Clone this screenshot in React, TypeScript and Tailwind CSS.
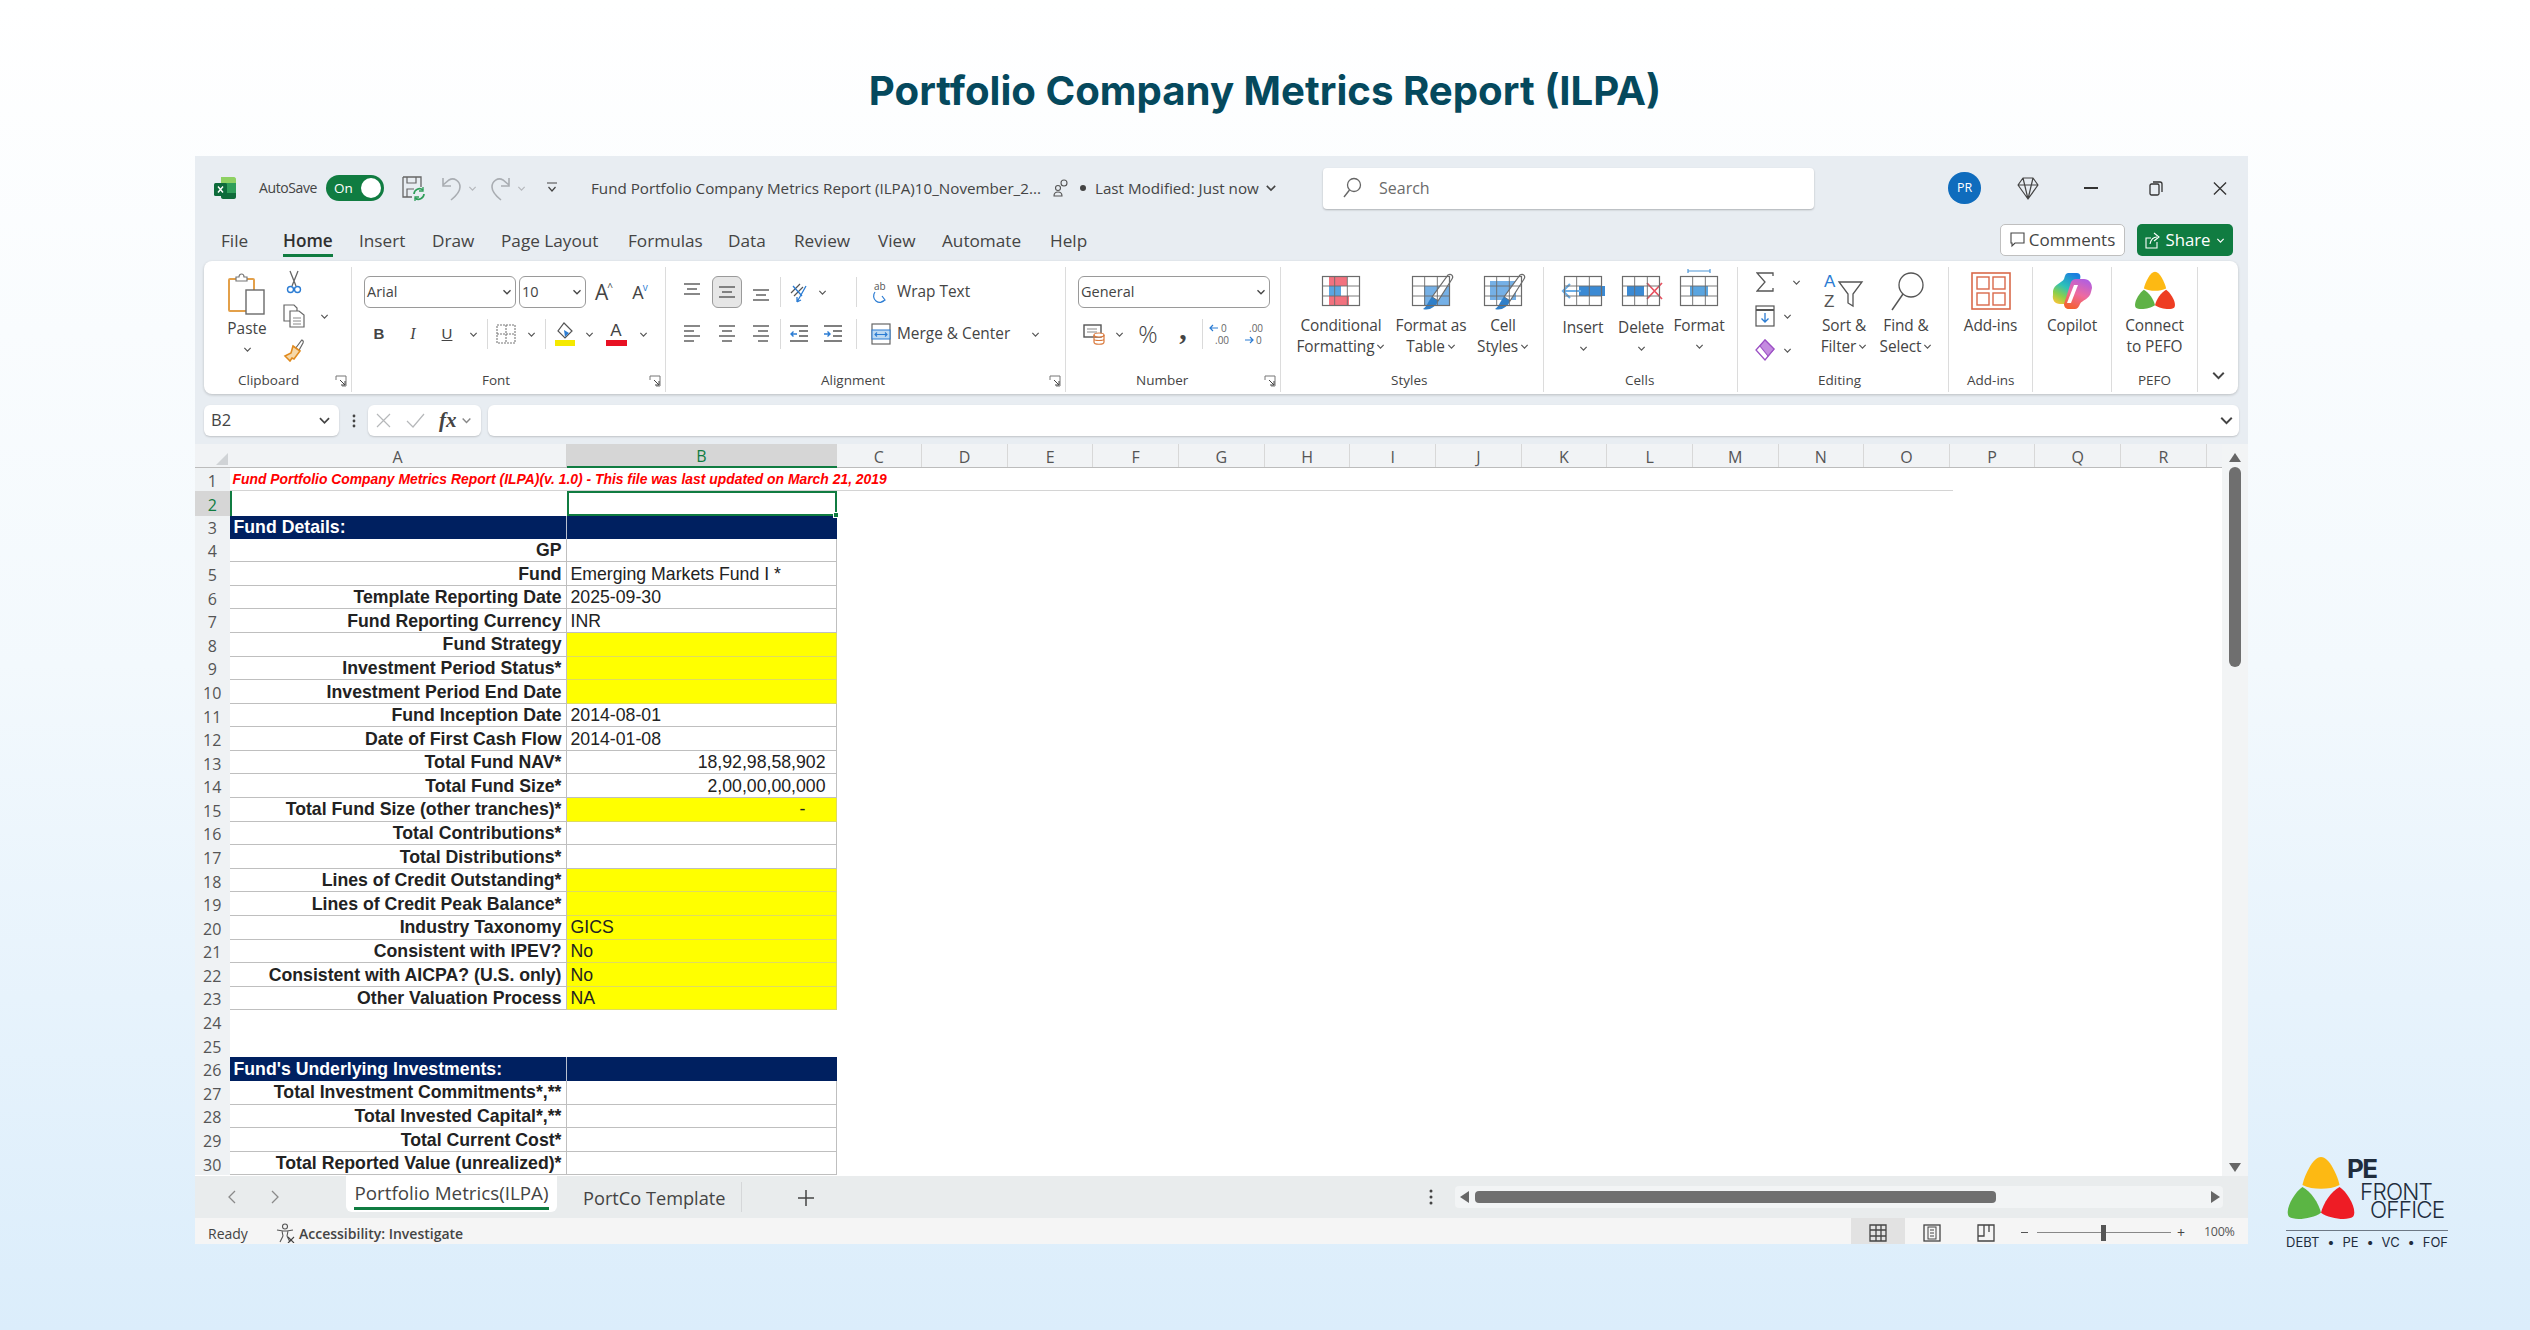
import React from "react";

const S = ({ c = "", children }: { c?: string; children?: React.ReactNode }) => (
  <div className={`flex items-center justify-center shrink-0 ${c}`}>{children}</div>
);

const Chev = ({ s = 9, col = "#555" }: { s?: number; col?: string }) => (
  <svg width={s} height={s} viewBox="0 0 10 10" fill="none" className="shrink-0">
    <path d="M1.5 3.2 L5 6.8 L8.5 3.2" stroke={col} strokeWidth="1.3" />
  </svg>
);

const VSep = () => <div className="w-px h-[30px] bg-[#dadada] shrink-0" />;

const Launcher = () => (
  <svg width="12" height="12" viewBox="0 0 12 12" fill="none" className="shrink-0">
    <path d="M1 5V1H11V11H7" stroke="#777" strokeWidth="1" />
    <path d="M5 5L10 10M10 6V10H6" stroke="#444" strokeWidth="1" />
  </svg>
);

const Group = ({
  c,
  label,
  lc = "",
  launcher,
  children,
  noBorder,
}: {
  c: string;
  label?: string;
  lc?: string;
  launcher?: boolean;
  children: React.ReactNode;
  noBorder?: boolean;
}) => (
  <div className={`shrink-0 mt-[6px] h-[125px] flex flex-col ${noBorder ? "" : "border-r border-[#dcdcdc]"} ${c}`}>
    <div className="h-[103px] flex items-start">{children}</div>
    <div className="h-[22px] flex items-center text-[13.5px] leading-none text-[#444]">
      <span className={lc}>{label}</span>
      {launcher && (
        <span className="ml-auto mr-[4px]">
          <Launcher />
        </span>
      )}
    </div>
  </div>
);

const Big = ({
  c,
  icon,
  lines,
  chev,
  firstTop = "",
}: {
  c: string;
  icon: React.ReactNode;
  lines: string[];
  chev?: "inline" | "below";
  firstTop?: string;
}) => (
  <div className={`shrink-0 flex flex-col items-center text-[15.4px] leading-[21px] text-[#444] tracking-[-0.1px] ${c}`}>
    <div className="h-[48px] flex items-center justify-center">{icon}</div>
    <div className={`whitespace-nowrap ${firstTop}`}>{lines[0]}</div>
    {lines[1] && (
      <div className="whitespace-nowrap flex items-center gap-[2px]">
        {lines[1]}
        {chev === "inline" && <Chev s={9} />}
      </div>
    )}
    {chev === "below" && (
      <div className="h-[21px] flex items-center">
        <Chev s={9} />
      </div>
    )}
  </div>
);

const GridBase = ({ children, w = 38, h = 30 }: { children?: React.ReactNode; w?: number; h?: number }) => (
  <svg width={w + 6} height={h + 10} viewBox={`-3 -8 ${w + 6} ${h + 10}`} fill="none" className="shrink-0 overflow-visible mb-[6px]">
    {children}
    <g stroke="#6b6b6b" strokeWidth="1.2">
      <rect x="0.5" y="0.5" width={w - 1} height={h - 1} />
      <path d={`M${w / 3} 0V${h}M${(2 * w) / 3} 0V${h}M0 ${h / 3}H${w}M0 ${(2 * h) / 3}H${w}`} strokeWidth="0.9" />
    </g>
  </svg>
);

const Brush = ({ x = 0, y = 0 }: { x?: number; y?: number }) => (
  <g transform={`translate(${x} ${y})`}>
    <path d="M27 -4 C30 -6 33 -3 31 0 L17 22 L11 18 Z" fill="#fff" stroke="#6a6a6a" strokeWidth="1.2" />
    <path d="M11 18 L17 22 C15 28 8 32 2 30 C6 28 7 22 11 18Z" fill="#2f7fc9" />
  </g>
);

const CondIcon = () => (
  <GridBase>
    <rect x="7" y="0" width="18" height="10" fill="#f2727f" />
    <rect x="7" y="10" width="12" height="10" fill="#5aa5e0" />
    <rect x="7" y="20" width="20" height="10" fill="#f2727f" />
  </GridBase>
);
const TableIcon = () => (
  <GridBase>
    <rect x="12" y="10" width="26" height="20" fill="#75b0e6" />
    <Brush x="9" y="3" />
  </GridBase>
);
const CellStyleIcon = () => (
  <GridBase>
    <rect x="6" y="5" width="26" height="19" fill="#75b0e6" />
    <Brush x="9" y="3" />
  </GridBase>
);
const InsertIcon = () => (
  <GridBase>
    <rect x="15" y="10" width="26" height="10" fill="#3b8ad4" />
    <path d="M17 15H0M6 8L-1 15L6 22" stroke="#6aaee8" strokeWidth="2.2" />
  </GridBase>
);
const DeleteIcon = () => (
  <GridBase>
    <rect x="5" y="10" width="17" height="10" fill="#3b8ad4" />
    <path d="M25 7L40 23M40 7L25 23" stroke="#e8505f" strokeWidth="1.7" />
  </GridBase>
);
const FormatIcon = () => (
  <GridBase>
    <rect x="10" y="10" width="18" height="10" fill="#5aa5e0" />
    <path d="M8 -5H30M8 -7V-3M30 -7V-3" stroke="#4c95d6" strokeWidth="1.2" />
  </GridBase>
);

const Petals = ({ w, h, y, g, r }: { w: number; h: number; y: string; g: string; r: string }) => (
  <svg width={w} height={h} viewBox="0 0 68 62" className="shrink-0">
    <path d="M34 0 C42 0 50 18 52 27 C42 32 26 32 16 27 C18 18 26 0 34 0Z" fill={y} />
    <path d="M16 29 C24 33 32 45 34 54 C26 60 8 62 3 58 C-2 52 8 34 16 29Z" fill={g} />
    <path d="M52 29 C44 33 36 45 34 54 C42 60 60 62 65 58 C70 52 60 34 52 29Z" fill={r} />
  </svg>
);

const AddinsIcon = () => (
  <svg width="40" height="38" viewBox="0 0 40 38" fill="none">
    <rect x="1" y="1" width="38" height="36" stroke="#d9694a" strokeWidth="1.6" />
    <rect x="6" y="5" width="12" height="12" stroke="#d9694a" strokeWidth="1.4" />
    <rect x="22" y="5" width="12" height="12" stroke="#d9694a" strokeWidth="1.4" />
    <rect x="6" y="21" width="12" height="12" stroke="#d9694a" strokeWidth="1.4" />
    <rect x="22" y="21" width="12" height="12" stroke="#d9694a" strokeWidth="1.4" />
  </svg>
);

const CopilotIcon = () => (
  <svg width="40" height="38" viewBox="0 0 40 38">
    <defs>
      <linearGradient id="cpa" x1="0.7" y1="0" x2="0.2" y2="1">
        <stop offset="0" stopColor="#1b7fe0" />
        <stop offset="0.45" stopColor="#2dc1b8" />
        <stop offset="0.75" stopColor="#8ccf4a" />
        <stop offset="1" stopColor="#f3c538" />
      </linearGradient>
      <linearGradient id="cpb" x1="0.7" y1="0" x2="0.3" y2="1">
        <stop offset="0" stopColor="#b15fe0" />
        <stop offset="0.5" stopColor="#ee6aa0" />
        <stop offset="1" stopColor="#f4612e" />
      </linearGradient>
    </defs>
    <path d="M16 1 H25 C28 1 29 4 28 7 L21 28 C20 31 18 32 15 32 H8 C3 32 0 28 1 23 L1 19 C2 12 10 11 12 7 C13 3 14 1 16 1Z" fill="url(#cpa)" />
    <path d="M17 37 C14 37 12 35 12 32 L19 10 C20 8 22 7 24 7 H32 C37 7 40 11 40 16 L39 20 C38 27 30 28 28 32 C27 35 25 37 23 37Z" fill="url(#cpb)" />
    <path d="M22 13 H26 L19 31 H15Z" fill="#fff" />
  </svg>
);

const Lines3 = ({ va }: { va: "top" | "mid" | "bot" }) => {
  const y = va === "top" ? [3, 8, 13] : va === "mid" ? [6, 11, 16] : [9, 14, 19];
  return (
    <svg width="18" height="22" viewBox="0 0 18 22" fill="none">
      {y.map((v, i) => (
        <path key={i} d={i === 1 ? `M4 ${v}H14` : `M1 ${v}H17`} stroke="#555" strokeWidth="1.4" />
      ))}
    </svg>
  );
};

const LinesH = ({ al }: { al: "l" | "c" | "r" }) => {
  const a = al === "l" ? [1, 1, 1, 1] : al === "c" ? [1, 4, 1, 4] : [1, 6, 1, 6];
  const w = [16, 10, 16, 10];
  return (
    <svg width="18" height="20" viewBox="0 0 18 20" fill="none">
      {[2, 7, 12, 17].map((v, i) => (
        <path key={i} d={`M${a[i]} ${v}H${a[i] + w[i]}`} stroke="#555" strokeWidth="1.4" />
      ))}
    </svg>
  );
};

const Indent = ({ inc }: { inc?: boolean }) => (
  <svg width="20" height="20" viewBox="0 0 20 20" fill="none">
    <path d="M1 2H19M10 7H19M10 12H19M1 17H19" stroke="#555" strokeWidth="1.4" />
    {inc ? (
      <path d="M1 10H7M4.5 7.5L7 10L4.5 12.5" stroke="#2b7cd3" strokeWidth="1.4" />
    ) : (
      <path d="M8 10H2M4.5 7.5L2 10L4.5 12.5" stroke="#2b7cd3" strokeWidth="1.4" />
    )}
  </svg>
);

const CellBox = ({ c, text }: { c: string; text: string }) => (
  <div className={`h-[32px] rounded-[6px] border border-[#9a9a9a] flex items-center pl-[2px] pr-[3px] text-[14.5px] text-[#444] shrink-0 ${c}`}>
    <span className="flex-1">{text}</span>
    <Chev s={10} col="#444" />
  </div>
);

const Clipboard = () => (
  <svg width="38" height="42" viewBox="0 0 38 42" fill="none">
    <rect x="1" y="6" width="25" height="32" rx="1" fill="#fff" stroke="#e3a04a" strokeWidth="2" />
    <path d="M8 6V4H11C11 0 16 0 16 4H19V8H8Z" fill="#fff" stroke="#777" strokeWidth="1.2" />
    <rect x="18" y="17" width="18" height="24" fill="#fff" stroke="#6a6a6a" strokeWidth="1.4" />
  </svg>
);
const Scissors = () => (
  <svg width="16" height="24" viewBox="0 0 16 24" fill="none">
    <path d="M4 1L10 16M12 1L6 16" stroke="#666" strokeWidth="1.3" />
    <circle cx="4.5" cy="19.5" r="3" stroke="#2b7cd3" strokeWidth="1.4" />
    <circle cx="11.5" cy="19.5" r="3" stroke="#2b7cd3" strokeWidth="1.4" />
  </svg>
);
const Copy = () => (
  <svg width="22" height="24" viewBox="0 0 22 24" fill="none">
    <path d="M1 1H11L14 4V17H1Z" fill="#fff" stroke="#666" strokeWidth="1.2" />
    <path d="M7 7H16L21 11V23H7Z" fill="#fff" stroke="#666" strokeWidth="1.2" />
    <path d="M10 14H18M10 17H18M10 20H18" stroke="#888" strokeWidth="1" />
  </svg>
);
const PaintBrush = () => (
  <svg width="22" height="24" viewBox="0 0 22 24" fill="none">
    <path d="M12 11L18 3C19 1 21 3 20 5L15 14Z" fill="#fff" stroke="#666" strokeWidth="1.2" />
    <path d="M10 8L17 13L11 21L9 20L7 23L5 21L2 18L8 15Z" fill="#f6d8a8" stroke="#e08a1e" strokeWidth="1.6" />
  </svg>
);

const rowsData: { n: number; a?: string; b?: string; kind?: "hdr" | "blank"; y?: boolean; right?: boolean }[] = [
  { n: 3, a: "Fund Details:", kind: "hdr" },
  { n: 4, a: "GP" },
  { n: 5, a: "Fund", b: "Emerging Markets Fund I *" },
  { n: 6, a: "Template Reporting Date", b: "2025-09-30" },
  { n: 7, a: "Fund Reporting Currency", b: "INR" },
  { n: 8, a: "Fund Strategy", y: true },
  { n: 9, a: "Investment Period Status*", y: true },
  { n: 10, a: "Investment Period End Date", y: true },
  { n: 11, a: "Fund Inception Date", b: "2014-08-01" },
  { n: 12, a: "Date of First Cash Flow", b: "2014-01-08" },
  { n: 13, a: "Total Fund NAV*", b: "18,92,98,58,902", right: true },
  { n: 14, a: "Total Fund Size*", b: "2,00,00,00,000", right: true },
  { n: 15, a: "Total Fund Size (other tranches)*", b: "-", right: true, y: true },
  { n: 16, a: "Total Contributions*" },
  { n: 17, a: "Total Distributions*" },
  { n: 18, a: "Lines of Credit Outstanding*", y: true },
  { n: 19, a: "Lines of Credit Peak Balance*", y: true },
  { n: 20, a: "Industry Taxonomy", b: "GICS", y: true },
  { n: 21, a: "Consistent with IPEV?", b: "No", y: true },
  { n: 22, a: "Consistent with AICPA? (U.S. only)", b: "No", y: true },
  { n: 23, a: "Other Valuation Process", b: "NA", y: true },
  { n: 24, kind: "blank" },
  { n: 25, kind: "blank" },
  { n: 26, a: "Fund's Underlying Investments:", kind: "hdr" },
  { n: 27, a: "Total Investment Commitments*,**" },
  { n: 28, a: "Total Invested Capital*,**" },
  { n: 29, a: "Total Current Cost*" },
  { n: 30, a: "Total Reported Value (unrealized)*" },
];

const RowNum = ({ n, active }: { n: number; active?: boolean }) => (
  <div
    className={`w-[34.5px] shrink-0 flex items-center justify-center pt-[2px] text-[16px] leading-none font-['Open_Sans',sans-serif] ${
      active ? "bg-[#d6d6d6] text-[#107c41]" : "bg-[#eff2f4] text-[#555]"
    }`}
  >
    {n}
  </div>
);

const tabs: [string, string][] = [
  ["File", "w-[62px]"],
  ["Home", "w-[76px]"],
  ["Insert", "w-[73px]"],
  ["Draw", "w-[69px]"],
  ["Page Layout", "w-[127px]"],
  ["Formulas", "w-[100px]"],
  ["Data", "w-[66px]"],
  ["Review", "w-[84px]"],
  ["View", "w-[64px]"],
  ["Automate", "w-[108px]"],
  ["Help", "w-[50px]"],
];

const colLetters = "CDEFGHIJKLMNOPQR".split("");

export default function App() {
  return (
    <div className="relative w-[2530px] h-[1330px] overflow-hidden bg-gradient-to-b from-white via-[#f3f9fd] to-[#dbedfb] font-['Open_Sans',sans-serif]">
      <h1 className="h-[156px] pt-[62px] text-center text-[40.2px] leading-[58px] font-bold text-[#05495d] font-['Inter',sans-serif]">
        Portfolio Company Metrics Report (ILPA)
      </h1>

      <div className="ml-[195px] w-[2053px] h-[1088px] bg-[#e8edf2] flex flex-col">
        {/* title bar */}
        <div className="h-[64px] flex items-center shrink-0 text-[#444]">
          <S c="w-[22px] ml-[19px]">
            <svg width="22" height="22" viewBox="0 0 22 22">
              <path d="M7 0H20C21 0 22 1 22 2V6H7Z" fill="#8ed163" />
              <path d="M7 6H22V16H7Z" fill="#2f9e5a" />
              <path d="M7 16H22V20C22 21 21 22 20 22H9C8 22 7 21 7 20Z" fill="#0f6b3a" />
              <rect x="0" y="6" width="13" height="13" rx="1.5" fill="#0d6b3b" />
              <path d="M4 9.5L9 15.5M9 9.5L4 15.5" stroke="#fff" strokeWidth="1.4" />
            </svg>
          </S>
          <div className="ml-[23px] w-[58px] text-[14px] whitespace-nowrap leading-none tracking-[-0.4px]">AutoSave</div>
          <div className="ml-[9px] w-[58px] h-[26px] rounded-full bg-[#107c41] flex items-center justify-between pl-[8px] pr-[3px] text-white text-[13.5px] shrink-0">
            <span>On</span>
            <span className="w-[20px] h-[20px] rounded-full bg-white" />
          </div>
          <S c="ml-[18px] w-[23px]">
            <svg width="23" height="25" viewBox="0 0 23 25" fill="none">
              <path d="M1 1H19V11M10 21H1V1" stroke="#666" strokeWidth="1.3" />
              <path d="M5 1V7H14V1M5 21V13H12" stroke="#666" strokeWidth="1.2" />
              <path d="M12 18A5.5 5.5 0 0 1 21 14M22 18A5.5 5.5 0 0 1 13 22" stroke="#2f9e5a" strokeWidth="1.7" />
              <path d="M21 11V15H17M13 25V21H17" stroke="#2f9e5a" strokeWidth="1.3" />
            </svg>
          </S>
          <S c="ml-[15px] w-[22px]">
            <svg width="22" height="26" viewBox="0 0 22 26" fill="none">
              <path d="M3 3V11H11M3 10L9 5C14 2 20 6 20 12C20 17 16 21 11 25" stroke="#a9adb2" strokeWidth="1.6" />
            </svg>
          </S>
          <S c="ml-[4px] w-[12px]">
            <Chev s={9} col="#b5b8bc" />
          </S>
          <S c="ml-[12px] w-[22px]">
            <svg width="22" height="26" viewBox="0 0 22 26" fill="none">
              <path d="M19 3V11H11M19 10L13 5C8 2 2 6 2 12C2 17 6 21 11 25" stroke="#a9adb2" strokeWidth="1.6" />
            </svg>
          </S>
          <S c="ml-[3px] w-[12px]">
            <Chev s={9} col="#b5b8bc" />
          </S>
          <S c="ml-[19px] w-[12px]">
            <svg width="12" height="14" viewBox="0 0 12 14" fill="none">
              <path d="M1 2H11M2.5 6L6 10L9.5 6" stroke="#444" strokeWidth="1.2" />
            </svg>
          </S>
          <div className="ml-[33px] w-[449px] text-[15.2px] whitespace-nowrap shrink-0">
            Fund Portfolio Company Metrics Report (ILPA)10_November_2...
          </div>
          <S c="ml-[12px] w-[18px]">
            <svg width="18" height="20" viewBox="0 0 18 20" fill="none">
              <circle cx="12" cy="5" r="3" stroke="#555" strokeWidth="1.1" />
              <circle cx="6" cy="10" r="2.5" stroke="#555" strokeWidth="1.1" />
              <path d="M2 18C2 15 4 14 6 14C8 14 10 15 10 18Z" stroke="#555" strokeWidth="1.1" />
            </svg>
          </S>
          <div className="ml-[10px] w-[6px] h-[6px] rounded-full bg-[#444] shrink-0" />
          <div className="ml-[9px] w-[164px] text-[15.2px] whitespace-nowrap shrink-0">Last Modified: Just now</div>
          <S c="ml-[6px] w-[12px]">
            <Chev s={12} col="#444" />
          </S>
          <div className="ml-[46px] w-[491px] h-[41px] bg-white rounded-[4px] shadow-[0_1px_2px_rgba(0,0,0,0.25)] flex items-center pl-[19px] shrink-0">
            <svg width="20" height="22" viewBox="0 0 20 22" fill="none">
              <circle cx="12" cy="8" r="6.5" stroke="#666" strokeWidth="1.3" />
              <path d="M7.5 13L2 20" stroke="#666" strokeWidth="1.4" />
            </svg>
            <span className="ml-[17px] text-[16px] text-[#6b6b6b]">Search</span>
          </div>
          <div className="ml-[134px] w-[33px] h-[32px] rounded-full bg-[#0f6cbd] text-white text-[12.5px] flex items-center justify-center shrink-0">PR</div>
          <S c="ml-[35px] w-[24px]">
            <svg width="22" height="24" viewBox="0 0 22 24" fill="none">
              <path d="M6 2H16L21 9L11 23L1 9Z M1 9H21 M6 2L11 23L16 2" stroke="#444" strokeWidth="1.2" strokeLinejoin="round" />
            </svg>
          </S>
          <S c="ml-[44px] w-[14px]">
            <div className="w-[14px] h-[1.6px] bg-[#333]" />
          </S>
          <S c="ml-[51px] w-[14px]">
            <svg width="14" height="16" viewBox="0 0 14 16" fill="none">
              <rect x="1" y="4" width="9" height="11" rx="1.5" stroke="#333" strokeWidth="1.3" />
              <path d="M4 2H11C12 2 13 3 13 4V12" stroke="#333" strokeWidth="1.3" />
            </svg>
          </S>
          <S c="ml-[50px] w-[14px]">
            <svg width="15" height="15" viewBox="0 0 15 15" fill="none">
              <path d="M1 1L14 14M14 1L1 14" stroke="#333" strokeWidth="1.4" />
            </svg>
          </S>
        </div>

        {/* tabs row */}
        <div className="h-[41px] flex shrink-0 text-[#444] text-[17.2px]">
          <div className="flex pl-[26px] pt-[8px]">
            {tabs.map(([t, w]) => (
              <div key={t} className={`shrink-0 ${w}`}>
                <div
                  className={`inline-block whitespace-nowrap leading-[26px] ${
                    t === "Home" ? "font-semibold text-[#2f2f2f] border-b-[3px] border-[#107c41]" : ""
                  }`}
                >
                  {t}
                </div>
              </div>
            ))}
          </div>
          <div className="ml-auto flex items-start pt-[4px] pr-[15px] gap-[12px]">
            <div className="w-[125px] h-[32px] bg-white rounded-[5px] border border-[#bfbfbf] flex items-center justify-center gap-[4px] text-[17px]">
              <svg width="15" height="16" viewBox="0 0 15 16" fill="none">
                <path d="M1 1H14V11H5L2 14V11H1Z" stroke="#444" strokeWidth="1.1" />
              </svg>
              Comments
            </div>
            <div className="w-[96px] h-[32px] bg-[#107c41] rounded-[5px] flex items-center justify-center gap-[5px] text-white text-[16.8px]">
              <svg width="15" height="17" viewBox="0 0 15 17" fill="none">
                <path d="M6 6H1V16H12V10M5 12C6 7 9 5 12 5M9 1L14 5L9 9" stroke="#fff" strokeWidth="1.1" />
              </svg>
              Share
              <Chev s={9} col="#fff" />
            </div>
          </div>
        </div>

        {/* ribbon */}
        <div className="ml-[9px] w-[2034px] h-[133px] shrink-0 bg-white rounded-[8px] shadow-[0_1px_3px_rgba(0,0,0,0.2)] flex">
          <Group c="w-[148px]" label="Clipboard" lc="ml-[34px]" launcher>
            <div className="ml-[16px] w-[54px] pt-[6px] flex flex-col items-center text-[15.4px] text-[#444]">
              <Clipboard />
              <div className="mt-[3px] leading-[21px]">Paste</div>
              <div className="h-[20px] flex items-center">
                <Chev s={9} />
              </div>
            </div>
            <div className="-mt-[2px]">
              {[<Scissors />, <Copy />, <PaintBrush />].map((ic, i) => (
                <div key={i} className="h-[34px] flex items-center">
                  <S c="w-[40px]">{ic}</S>
                  {i === 1 && (
                    <span className="ml-[6px]">
                      <Chev s={9} />
                    </span>
                  )}
                </div>
              ))}
            </div>
          </Group>

          <Group c="w-[314px]" label="Font" lc="ml-[130px]" launcher>
            <div className="pt-[9px]">
              <div className="flex items-center pl-[12px]">
                <CellBox c="w-[152px]" text="Arial" />
                <CellBox c="ml-[3px] w-[67px]" text="10" />
                <S c="w-[36px] text-[#444] text-[21px] leading-none">
                  A<sup className="text-[10px] -ml-px">^</sup>
                </S>
                <S c="w-[36px] text-[#444] text-[18px] leading-none">
                  A<sup className="text-[10px] -ml-px text-[#2b7cd3]">v</sup>
                </S>
              </div>
              <div className="flex items-center h-[28px] mt-[12px] pl-[10px] text-[#444]">
                <S c="w-[34px] font-['Liberation_Sans'] font-bold text-[15px]">B</S>
                <S c="w-[34px] font-['Liberation_Serif'] italic text-[16px]">I</S>
                <S c="w-[34px] font-['Liberation_Sans'] underline text-[15px]">U</S>
                <S c="w-[18px]">
                  <Chev s={9} />
                </S>
                <div className="ml-[5px]">
                  <VSep />
                </div>
                <S c="w-[36px]">
                  <svg width="20" height="20" viewBox="0 0 20 20" fill="none">
                    <path d="M1 1H19V19H1ZM10 1V19M1 10H19" stroke="#777" strokeWidth="1.1" strokeDasharray="2 1" />
                  </svg>
                </S>
                <S c="w-[14px]">
                  <Chev s={9} />
                </S>
                <div className="ml-[7px]">
                  <VSep />
                </div>
                <S c="w-[38px]">
                  <svg width="22" height="24" viewBox="0 0 22 24" fill="none">
                    <path d="M10 1L18 9L11 16L4 9Z" stroke="#555" strokeWidth="1.2" />
                    <path d="M10 8L15 11L11 15Z" fill="#2b7cd3" />
                    <rect x="1" y="18" width="20" height="6" fill="#f5e900" />
                  </svg>
                </S>
                <S c="w-[10px]">
                  <Chev s={9} />
                </S>
                <S c="w-[44px]">
                  <div className="flex flex-col items-center leading-none text-[17px] font-['Liberation_Sans']">
                    A<div className="w-[21px] h-[6px] bg-[#e81123] mt-[1px]" />
                  </div>
                </S>
                <S c="w-[10px]">
                  <Chev s={9} />
                </S>
              </div>
            </div>
          </Group>

          <Group c="w-[400px]" label="Alignment" lc="ml-[155px]" launcher>
            <div className="pt-[9px] text-[15.4px] text-[#444]">
              <div className="flex items-center h-[32px] pl-[8px]">
                <S c="w-[36px]">
                  <Lines3 va="top" />
                </S>
                <S c="w-[34px]">
                  <div className="w-[30px] h-[32px] rounded-[6px] bg-[#e6e6e6] border border-[#9a9a9a] flex items-center justify-center">
                    <Lines3 va="mid" />
                  </div>
                </S>
                <S c="w-[34px]">
                  <Lines3 va="bot" />
                </S>
                <div className="ml-[2px]">
                  <VSep />
                </div>
                <S c="w-[36px]">
                  <svg width="22" height="24" viewBox="0 0 22 24" fill="none">
                    <path d="M3 13L12 4M6 16L15 7" stroke="#555" strokeWidth="1.2" />
                    <path d="M5 6L14 16M18 6L9 22M9 22L9 17M9 22L13 20" stroke="#2b7cd3" strokeWidth="1.3" />
                  </svg>
                </S>
                <S c="w-[10px]">
                  <Chev s={9} />
                </S>
                <div className="ml-[29px]">
                  <VSep />
                </div>
                <S c="ml-[15px] w-[18px]">
                  <svg width="18" height="24" viewBox="0 0 18 24" fill="none" className="overflow-visible">
                    <path d="M3 12A6 6 0 0 0 13 20M10 16L13 20L9 22" stroke="#2b7cd3" strokeWidth="1.2" />
                    <text x="2" y="10" fontSize="10" fill="#555">ab</text>
                  </svg>
                </S>
                <div className="ml-[7px] whitespace-nowrap">Wrap Text</div>
              </div>
              <div className="flex items-center h-[28px] mt-[12px] pl-[8px]">
                <S c="w-[36px]">
                  <LinesH al="l" />
                </S>
                <S c="w-[34px]">
                  <LinesH al="c" />
                </S>
                <S c="w-[34px]">
                  <LinesH al="r" />
                </S>
                <div className="ml-[2px]">
                  <VSep />
                </div>
                <S c="w-[36px]">
                  <Indent />
                </S>
                <S c="w-[32px]">
                  <Indent inc />
                </S>
                <div className="ml-[7px]">
                  <VSep />
                </div>
                <S c="ml-[14px] w-[20px]">
                  <svg width="20" height="22" viewBox="0 0 20 22" fill="none">
                    <rect x="1" y="1" width="18" height="20" stroke="#666" strokeWidth="1.2" />
                    <rect x="1" y="7" width="18" height="9" fill="#bcd9f2" stroke="#2b7cd3" strokeWidth="1" />
                    <path d="M4 11.5H16M6 9.5L4 11.5L6 13.5M14 9.5L16 11.5L14 13.5" stroke="#2b7cd3" strokeWidth="1.1" />
                  </svg>
                </S>
                <div className="ml-[6px] w-[131px] whitespace-nowrap">Merge &amp; Center</div>
                <S c="w-[14px]">
                  <Chev s={9} />
                </S>
              </div>
            </div>
          </Group>

          <Group c="w-[215px]" label="Number" lc="ml-[70px]" launcher>
            <div className="pt-[9px] text-[#444]">
              <CellBox c="ml-[12px] w-[192px]" text="General" />
              <div className="flex items-center h-[28px] mt-[12px] pl-[12px]">
                <S c="w-[34px]">
                  <svg width="24" height="24" viewBox="0 0 24 24" fill="none">
                    <rect x="1" y="3" width="17" height="12" fill="#fff" stroke="#555" strokeWidth="1.4" />
                    <path d="M4 7H14M4 10H14" stroke="#888" strokeWidth="1.2" />
                    <ellipse cx="16" cy="13" rx="5" ry="2" fill="#fff" stroke="#d9783b" strokeWidth="1.2" />
                    <path d="M11 13V20C11 23 21 23 21 20V13M11 17C11 19 21 19 21 17" stroke="#d9783b" strokeWidth="1.2" fill="none" />
                  </svg>
                </S>
                <S c="w-[14px]">
                  <Chev s={9} />
                </S>
                <S c="w-[44px] text-[24px] leading-none font-light">%</S>
                <S c="w-[26px] text-[30px] leading-none font-bold font-['Liberation_Serif'] pb-[10px]">,</S>
                <div className="ml-[6px]">
                  <VSep />
                </div>
                <S c="w-[36px]">
                  <svg width="26" height="26" viewBox="0 0 26 26" fill="none" className="overflow-visible">
                    <path d="M2 7H10M5 4L2 7L5 10" stroke="#2b7cd3" strokeWidth="1.2" />
                    <text x="13" y="11" fontSize="10" fill="#666">0</text>
                    <text x="7" y="23" fontSize="10" fill="#666">.00</text>
                  </svg>
                </S>
                <S c="w-[32px]">
                  <svg width="26" height="26" viewBox="0 0 26 26" fill="none" className="overflow-visible">
                    <text x="7" y="11" fontSize="10" fill="#666">.00</text>
                    <path d="M3 19H11M8 16L11 19L8 22" stroke="#2b7cd3" strokeWidth="1.2" />
                    <text x="14" y="23" fontSize="10" fill="#666">0</text>
                  </svg>
                </S>
              </div>
            </div>
          </Group>

          <Group c="w-[263px]" label="Styles" lc="ml-[110px]">
            <div className="flex pl-[14px]">
              <Big c="w-[92px]" icon={<CondIcon />} lines={["Conditional", "Formatting"]} chev="inline" />
              <Big c="w-[88px]" icon={<TableIcon />} lines={["Format as", "Table"]} chev="inline" />
              <Big c="w-[56px]" icon={<CellStyleIcon />} lines={["Cell", "Styles"]} chev="inline" />
            </div>
          </Group>

          <Group c="w-[194px]" label="Cells" lc="ml-[81px]">
            <div className="flex pl-[10px]">
              <Big c="w-[58px]" icon={<InsertIcon />} lines={["Insert"]} chev="below" firstTop="mt-[2px]" />
              <Big c="w-[58px]" icon={<DeleteIcon />} lines={["Delete"]} chev="below" firstTop="mt-[2px]" />
              <Big c="w-[58px]" icon={<FormatIcon />} lines={["Format"]} chev="below" />
            </div>
          </Group>

          <Group c="w-[211px]" label="Editing" lc="ml-[80px]">
            <div className="flex pl-[10px]">
              <div className="w-[65px] -mt-[2px]">
                <div className="h-[34px] flex items-center">
                  <S c="w-[34px]">
                    <svg width="18" height="20" viewBox="0 0 18 20" fill="none">
                      <path d="M17 4V1H1L9 10L1 19H17V16" stroke="#555" strokeWidth="1.3" />
                    </svg>
                  </S>
                  <span className="ml-[10px]">
                    <Chev s={9} />
                  </span>
                </div>
                <div className="h-[34px] flex items-center">
                  <S c="w-[34px]">
                    <svg width="20" height="22" viewBox="0 0 20 22" fill="none">
                      <rect x="1" y="1" width="18" height="20" fill="#fff" stroke="#555" strokeWidth="1.2" />
                      <path d="M1 5H19" stroke="#555" strokeWidth="2" />
                      <path d="M10 8V17M6.5 13.5L10 17L13.5 13.5" stroke="#2b7cd3" strokeWidth="1.3" />
                    </svg>
                  </S>
                  <span className="ml-px">
                    <Chev s={9} />
                  </span>
                </div>
                <div className="h-[34px] flex items-center">
                  <S c="w-[34px]">
                    <svg width="20" height="22" viewBox="0 0 20 22" fill="none">
                      <path d="M10 1L19 10L10 21L1 11Z" fill="#fff" stroke="#9b4fc4" strokeWidth="1.3" />
                      <path d="M10 1L19 10L13 17L5 7Z" fill="#c48be0" stroke="#9b4fc4" strokeWidth="1.1" />
                    </svg>
                  </S>
                  <span className="ml-px">
                    <Chev s={9} />
                  </span>
                </div>
              </div>
              <Big
                c="w-[62px]"
                icon={
                  <svg width="42" height="38" viewBox="0 0 42 38" fill="none" className="overflow-visible">
                    <text x="1" y="15" fontSize="17" fill="#2b7cd3" fontFamily="Liberation Sans">A</text>
                    <text x="1" y="35" fontSize="17" fill="#555" fontFamily="Liberation Sans">Z</text>
                    <path d="M16 10H39L30 22V34L25 31V22Z" stroke="#555" strokeWidth="1.3" />
                  </svg>
                }
                lines={["Sort &", "Filter"]}
                chev="inline"
              />
              <Big
                c="w-[62px]"
                icon={
                  <svg width="42" height="42" viewBox="0 0 42 42" fill="none">
                    <circle cx="26" cy="15" r="12" stroke="#555" strokeWidth="1.3" />
                    <path d="M18 24L7 40" stroke="#555" strokeWidth="1.5" />
                  </svg>
                }
                lines={["Find &", "Select"]}
                chev="inline"
              />
            </div>
          </Group>

          <Group c="w-[84px]" label="Add-ins" lc="ml-[18px]">
            <Big c="w-full" icon={<AddinsIcon />} lines={["Add-ins"]} />
          </Group>
          <Group c="w-[79px]">
            <Big c="w-full" icon={<CopilotIcon />} lines={["Copilot"]} />
          </Group>
          <Group c="w-[86px]" label="PEFO" lc="ml-[26px]">
            <Big
              c="w-full"
              icon={<Petals w={42} h={42} y="#fdb913" g="#5fb246" r="#ee3d23" />}
              lines={["Connect", "to PEFO"]}
            />
          </Group>
          <div className="flex-1 flex flex-col justify-end items-center pb-[11px]">
            <Chev s={15} col="#444" />
          </div>
        </div>

        {/* formula bar */}
        <div className="ml-[9px] mt-[11px] h-[31px] shrink-0 flex items-center">
          <div className="w-[135px] h-full bg-white rounded-[6px] shadow-[0_1px_2px_rgba(0,0,0,0.18)] flex items-center pl-[7px] pr-[8px] text-[16.5px] text-[#444]">
            <span className="flex-1">B2</span>
            <Chev s={13} col="#444" />
          </div>
          <S c="w-[29px]">
            <svg width="4" height="14" viewBox="0 0 4 14">
              <circle cx="2" cy="2" r="1.4" fill="#444" />
              <circle cx="2" cy="7" r="1.4" fill="#444" />
              <circle cx="2" cy="12" r="1.4" fill="#444" />
            </svg>
          </S>
          <div className="w-[113px] h-full bg-white rounded-[6px] shadow-[0_1px_2px_rgba(0,0,0,0.18)] flex items-center pl-[7px] gap-[14px] shrink-0">
            <svg width="17" height="17" viewBox="0 0 17 17" fill="none">
              <path d="M2 2L15 15M15 2L2 15" stroke="#b6b8ba" strokeWidth="1.2" />
            </svg>
            <svg width="19" height="17" viewBox="0 0 19 17" fill="none">
              <path d="M1 9L7 15L18 2" stroke="#b6b8ba" strokeWidth="1.2" />
            </svg>
            <span className="font-['Liberation_Serif'] italic font-bold text-[21px] leading-none text-[#444] whitespace-nowrap">fx</span>
            <span className="-ml-[10px]">
              <Chev s={11} col="#888" />
            </span>
          </div>
          <div className="ml-[7px] w-[1751px] h-full bg-white rounded-[6px] shadow-[0_1px_2px_rgba(0,0,0,0.18)] flex items-center justify-end pr-[5px]">
            <Chev s={15} col="#444" />
          </div>
        </div>

        {/* sheet */}
        <div className="mt-[8px] flex shrink-0 h-[732px]">
          <div className="w-[2027px] shrink-0 flex flex-col">
            <div className="h-[24px] flex shrink-0 text-[16px] text-[#555] leading-none border-b border-[#bcbcbc] bg-[#f1f3f5]">
              <div className="w-[34.5px] shrink-0 flex items-end justify-end pr-[2px] pb-[2px]">
                <svg width="12" height="12" viewBox="0 0 12 12">
                  <path d="M12 0V12H0Z" fill="#d0d3d6" />
                </svg>
              </div>
              <div className="w-[337px] shrink-0 flex items-center justify-center pt-[2px] border-r border-[#d5d5d5]">A</div>
              <div className="w-[270px] shrink-0 flex items-center justify-center pt-[2px] bg-[#d6d6d6] text-[#107c41] border-b-2 border-[#107c41] h-[24px]">B</div>
              {colLetters.map((l) => (
                <div key={l} className="w-[85.65px] shrink-0 flex items-center justify-center pt-[2px] border-r border-[#d8d8d8]">
                  {l}
                </div>
              ))}
            </div>
            <div className="h-[708px] bg-white overflow-hidden font-['Liberation_Sans',sans-serif] text-[17.7px] text-[#222]">
              {/* row 1 */}
              <div className="flex h-[23px]">
                <RowNum n={1} />
                <div className="w-[1723px] border-b border-[#d4d4d4] flex items-center pl-[3px] pt-[2px] text-[13.9px] font-bold italic text-[#ff0000] whitespace-nowrap leading-none">
                  Fund Portfolio Company Metrics Report (ILPA)(v. 1.0) - This file was last updated on March 21, 2019
                </div>
              </div>
              {/* row 2 */}
              <div className="flex h-[25px]">
                <RowNum n={2} active />
                <div className="w-[337px] shrink-0 border-l-2 border-[#107c41]" />
                <div className="relative w-[270px] shrink-0 border-2 border-[#107c41]">
                  <div className="absolute -right-[4px] -bottom-[4px] w-[6px] h-[6px] bg-[#107c41] border border-white" />
                </div>
              </div>
              {rowsData.map((r) => {
                const h = r.n === 3 ? "h-[22.7px]" : "h-[23.58px]";
                if (r.kind === "blank")
                  return (
                    <div key={r.n} className={`flex ${h}`}>
                      <RowNum n={r.n} />
                    </div>
                  );
                if (r.kind === "hdr")
                  return (
                    <div key={r.n} className={`flex ${h}`}>
                      <RowNum n={r.n} />
                      <div className="w-[337px] shrink-0 bg-[#002060] text-white font-bold pl-[4px] pt-[1px] flex items-center border-r border-[#b9c0cf] whitespace-nowrap leading-none">
                        {r.a}
                      </div>
                      <div className="w-[270px] shrink-0 bg-[#002060]" />
                    </div>
                  );
                return (
                  <div key={r.n} className={`flex ${h}`}>
                    <RowNum n={r.n} />
                    <div className="w-[337px] shrink-0 flex items-center justify-end pr-[4px] pt-[2px] font-bold whitespace-nowrap leading-none border-r border-b border-[#bfbfbf]">
                      {r.a}
                    </div>
                    <div
                      className={`w-[270px] shrink-0 flex items-center pt-[2px] whitespace-nowrap leading-none border-r border-b ${
                        r.y ? "bg-[#ffff00] border-[#dedb60]" : "border-[#bfbfbf]"
                      } ${r.right ? (r.b === "-" ? "justify-end pr-[30px]" : "justify-end pr-[10px]") : "pl-[4px]"}`}
                    >
                      {r.b}
                    </div>
                  </div>
                );
              })}
            </div>
          </div>
          <div className="flex-1 bg-[#f2f4f5] flex flex-col items-center pt-[8px] pb-[3px]">
            <svg width="12" height="10" viewBox="0 0 12 10">
              <path d="M6 1L12 10H0Z" fill="#666" />
            </svg>
            <div className="mt-[5px] w-[12px] h-[200px] rounded-full bg-[#6f6f6f]" />
            <svg width="12" height="10" viewBox="0 0 12 10" className="mt-auto">
              <path d="M6 9L12 0H0Z" fill="#666" />
            </svg>
          </div>
        </div>

        {/* sheet tabs */}
        <div className="h-[42px] flex shrink-0 bg-[#e9eced] text-[#444]">
          <S c="ml-[30px] w-[14px]">
            <svg width="10" height="16" viewBox="0 0 10 16" fill="none">
              <path d="M8 2L2 8L8 14" stroke="#8a8a8a" strokeWidth="1.3" />
            </svg>
          </S>
          <S c="ml-[29px] w-[14px]">
            <svg width="10" height="16" viewBox="0 0 10 16" fill="none">
              <path d="M2 2L8 8L2 14" stroke="#8a8a8a" strokeWidth="1.3" />
            </svg>
          </S>
          <div className="ml-[64px] w-[211px] h-[36px] bg-white rounded-b-[6px] flex flex-col items-center shrink-0 pt-[3px]">
            <div className="text-[18.8px] leading-[28px] whitespace-nowrap border-b-[3px] border-[#107c41]">Portfolio Metrics(ILPA)</div>
          </div>
          <div className="ml-[26px] w-[158px] shrink-0 flex items-center pt-[3px] text-[18.2px] whitespace-nowrap">PortCo Template</div>
          <div className="w-px h-[30px] bg-[#d5d7d9] shrink-0 mt-[6px]" />
          <S c="ml-[54px] w-[20px] pt-[1px]">
            <svg width="18" height="18" viewBox="0 0 18 18" fill="none">
              <path d="M9 1V17M1 9H17" stroke="#444" strokeWidth="1.5" />
            </svg>
          </S>
          <S c="ml-[613px] w-[4px]">
            <svg width="4" height="16" viewBox="0 0 4 16">
              <circle cx="2" cy="2" r="1.5" fill="#444" />
              <circle cx="2" cy="8" r="1.5" fill="#444" />
              <circle cx="2" cy="14" r="1.5" fill="#444" />
            </svg>
          </S>
          <div className="ml-[22px] mt-[10px] w-[768px] h-[22px] rounded-[4px] bg-[#f2f4f5] flex items-center pl-[5px] pr-[3px]">
            <svg width="9" height="12" viewBox="0 0 9 12">
              <path d="M0 6L9 0V12Z" fill="#666" />
            </svg>
            <div className="ml-[6px] w-[521px] h-[12px] rounded-[4px] bg-[#6f6f6f]" />
            <svg width="9" height="12" viewBox="0 0 9 12" className="ml-auto">
              <path d="M9 6L0 0V12Z" fill="#666" />
            </svg>
          </div>
        </div>

        {/* status bar */}
        <div className="h-[26px] flex items-center shrink-0 bg-[#f5f5f5] text-[14px] text-[#444]">
          <div className="ml-[13px] w-[68px] pt-[4px]">Ready</div>
          <svg width="19" height="20" viewBox="0 0 19 20" fill="none" className="shrink-0 mt-[4px]">
            <circle cx="9" cy="3.5" r="2.5" stroke="#555" strokeWidth="1.1" />
            <path d="M1 7L7 8H11L17 7M6 8L7 13M12 8L11 13M7 13L4 19M11 13L14 19" stroke="#555" strokeWidth="1.1" />
            <path d="M12 14L18 20M18 14L12 20" stroke="#444" strokeWidth="1.1" />
          </svg>
          <div className="ml-[4px] pt-[4px] font-semibold whitespace-nowrap">Accessibility: Investigate</div>
          <div className="ml-auto flex items-center h-full">
            <S c="w-[54px] h-full pt-[3px] bg-[#e2e2e2]">
              <svg width="18" height="18" viewBox="0 0 18 18" fill="none">
                <path d="M1 1H17V17H1ZM7 1V17M12 1V17M1 6H17M1 12H17" stroke="#444" strokeWidth="1.3" />
              </svg>
            </S>
            <S c="w-[54px] pt-[3px]">
              <svg width="18" height="18" viewBox="0 0 18 18" fill="none">
                <rect x="1" y="1" width="16" height="16" stroke="#444" strokeWidth="1.3" />
                <rect x="5" y="3" width="8" height="12" stroke="#444" strokeWidth="1" />
                <path d="M7 6H11M7 9H11M7 12H11" stroke="#444" strokeWidth="1" />
              </svg>
            </S>
            <S c="w-[54px] pt-[3px]">
              <svg width="18" height="18" viewBox="0 0 18 18" fill="none">
                <path d="M1 1H17V17H1ZM7 1V12H1M12 1V8" stroke="#444" strokeWidth="1.3" />
              </svg>
            </S>
            <div className="w-[7px] h-px bg-[#555] ml-[8px] mt-[3px] shrink-0" />
            <div className="ml-[9px] mt-[3px] w-[134px] h-[10px] relative shrink-0 flex items-center">
              <div className="w-full h-px bg-[#888]" />
              <div className="absolute left-[64px] top-[-3px] w-[5px] h-[16px] bg-[#555]" />
            </div>
            <div className="ml-[6px] mt-[3px] text-[14px] leading-none">+</div>
            <div className="ml-[19px] mr-[10px] mt-[3px] w-[34px] text-[12.5px] text-[#555] tracking-[-0.3px]">100%</div>
          </div>
        </div>
      </div>

      {/* logo */}
      <div className="absolute left-[2286px] top-[1157px] w-[162px] font-['Inter',sans-serif] text-[#1f2d3d]">
        <div className="flex h-[64px]">
          <Petals w={70} h={64} y="#fdb913" g="#5bb544" r="#ee1c25" />
          <div className="-ml-[9px] flex flex-col">
            <div className="text-[26px] leading-[24px] font-bold tracking-[-1.5px] h-[26px]">PE</div>
            <div className="ml-[13px] text-[22.5px] leading-[18px] font-light tracking-[-0.8px] whitespace-nowrap">FRONT</div>
            <div className="ml-[23px] text-[22.5px] leading-[18px] font-light tracking-[-0.8px] whitespace-nowrap">OFFICE</div>
          </div>
        </div>
        <div className="mt-[9px] h-px bg-[#6d7885]" />
        <div className="mt-[3px] flex justify-between text-[13px] leading-[16px] whitespace-nowrap">
          <span>DEBT</span>
          <span>•</span>
          <span>PE</span>
          <span>•</span>
          <span>VC</span>
          <span>•</span>
          <span>FOF</span>
        </div>
      </div>
    </div>
  );
}
